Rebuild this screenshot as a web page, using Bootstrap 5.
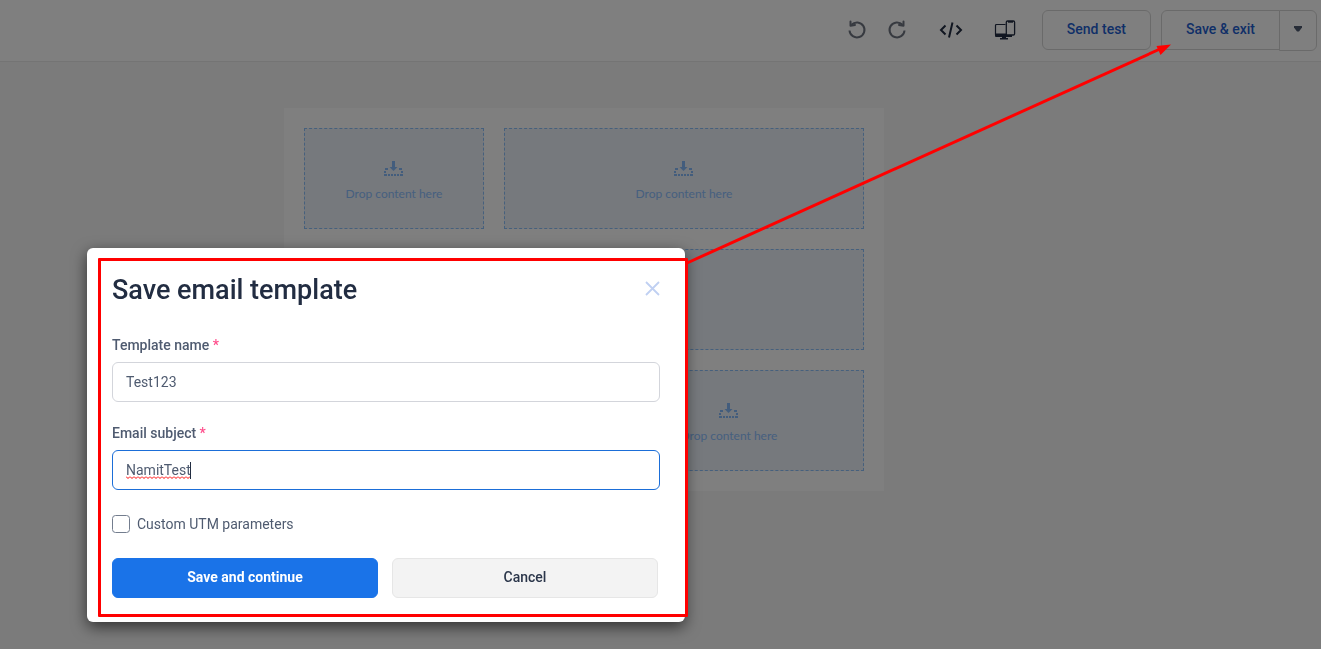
<!DOCTYPE html>
<html lang="en">
<head>
<meta charset="utf-8">
<meta name="viewport" content="width=device-width, initial-scale=1">
<title>Save email template</title>
<link href="https://cdn.jsdelivr.net/npm/bootstrap@5.3.0/dist/css/bootstrap.min.css" rel="stylesheet">
<script src="https://cdn.jsdelivr.net/npm/bootstrap@5.3.0/dist/js/bootstrap.bundle.min.js" defer></script>
<style>
  body { font-family: Roboto, "Liberation Sans", sans-serif; font-size: 14px; background: #f7f7f7; color: #4f5b70; min-height: 100vh; }
  svg { display: block; }

  .editor-bar { background: #fff; border-bottom: 1px solid #e8e8e8; padding: 10px 4px 10px 0; height: 62px; }
  .tool-btn { width: 40px; height: 40px; padding: 0; border: 0; background: none; display: flex; align-items: center; justify-content: center; }
  .tool-group { gap: 14px; margin-right: 17px; }
  .save-group { margin-left: 10px; }
  .bar-btn { --bs-btn-color: #1f5fd0; --bs-btn-border-color: #d5d5d5; --bs-btn-bg: #fff; --bs-btn-padding-x: 24px; --bs-btn-padding-y: 0; --bs-btn-font-size: 14px; --bs-btn-font-weight: 500; --bs-btn-border-radius: 6px; height: 40px; line-height: 36px; padding-bottom: 2px; }
  .bar-caret { --bs-btn-padding-x: 14px; height: 41px; padding-bottom: 4px; }

  .canvas-area { padding: 46px 153px 46px 0; }
  .paper { background: #fff; max-width: 600px; padding: 20px; }
  .paper-row { display: grid; gap: 20px; }
  .split-third { grid-template-columns: 180px 1fr; }
  .split-half { grid-template-columns: 1fr 1fr; }
  .drop-zone { height: 101px; border: 1px dashed #8cc0fa; background: #ecf2fa; color: #8cc0ff; font: 12px/18px Lato, "Noto Sans", sans-serif; padding-top: 6px; }

  .veil { position: fixed; inset: 0; background: rgba(0, 0, 0, .5); }
  .save-dialog { position: absolute; left: 87px; top: 248px; width: 598px; background: #fff; border-radius: 6px; padding: 24px 25px; box-shadow: 0 5px 15px rgba(0, 0, 0, .6); }
  .dialog-head { margin-bottom: 26px; }
  .save-dialog h1 { font-size: 27px; line-height: 37px; font-weight: 500; color: #222d42; }
  .close-x { width: 16px; height: 16px; padding: 0; border: 0; background: none; }
  .field-label { font-weight: 500; line-height: 20px; margin-bottom: 7px; }
  .field-block { margin-bottom: 21px; }
  .req { color: #ff4d8b; }
  .field-input { height: 40px; font-size: 14px; padding: 0 13px; color: #4f5b70; border-color: #d3d5db; border-radius: 6px; }
  .field-input.is-active { border-color: #1b6ed8; }
  .typing-mark { position: absolute; left: 14px; top: 12px; pointer-events: none; }
  .utm-check { width: 18px; height: 18px; margin: 0; border: 1px solid #737d8e; border-radius: 4px; }
  .utm-label { line-height: 20px; }
  .utm-row { gap: 7px; }
  .button-row { gap: 14px; }
  .dialog-btn { height: 40px; padding: 0 0 2px; font-size: 14px; border-radius: 6px; width: 266px; }
  .btn-go { --bs-btn-bg: #1a73e8; --bs-btn-border-color: #1a73e8; --bs-btn-color: #fff; font-weight: 700; }
  .btn-no { --bs-btn-bg: #f3f3f3; --bs-btn-border-color: #e6e6e6; --bs-btn-color: #2b364a; font-weight: 500; }
  .red-frame { position: absolute; inset: 10px -3px 5px 11px; border: 3px solid #f00; border-radius: 1px; pointer-events: none; }
  .red-arrow { position: absolute; left: 0; top: 0; pointer-events: none; }
</style>
</head>
<body>
<header class="editor-bar d-flex justify-content-end align-items-start">
  <div class="tool-group d-flex">
    <div class="d-flex">
      <button class="tool-btn" type="button" aria-label="Undo">
        <svg width="20" height="20" viewBox="0 0 20 20" fill="none" stroke="#6f7581" stroke-width="2"><path d="M4.500 4.800A7.500 7.500 0 1 1 2.500 10.500"/><path d="M3.500 1.500v4.300l4.500-.8" stroke-linejoin="round" stroke-linecap="round"/></svg>
      </button>
      <button class="tool-btn" type="button" aria-label="Redo">
        <svg width="20" height="20" viewBox="0 0 20 20" fill="none" stroke="#6f7581" stroke-width="2"><path d="M15.500 4.800A7.500 7.500 0 1 0 17.500 10.500"/><path d="M16.500 1.500v4.300l-4.500-.8" stroke-linejoin="round" stroke-linecap="round"/></svg>
      </button>
    </div>
    <button class="tool-btn" type="button" aria-label="Code">
      <svg width="24" height="18" viewBox="0 0 24 18" fill="none" stroke="#222d42" stroke-width="2"><path d="M6.500 4.500L2 9l4.500 4.500M17.500 4.500L22 9l-4.500 4.500M13.500 1.500L10 16.500"/></svg>
    </button>
    <button class="tool-btn" type="button" aria-label="Preview on devices">
      <svg width="22" height="20" viewBox="0 0 22 20"><path d="M11.500 4.500H2.500A1 1 0 0 0 1.500 5.500v9a1 1 0 0 0 1 1H17v-1" fill="none" stroke="#222d42" stroke-width="1.200"/><path d="M1 13.500h11V15h6v2H2a1 1 0 0 1-1-1z" fill="#222d42"/><path d="M8 16h4v2h2v1.500H6V18h2z" fill="#222d42"/><rect x="12.300" y="1" width="8.300" height="14" rx="1.300" fill="#fff" stroke="#222d42" stroke-width="1.300"/><path d="M14 1h5v1.700h-5z" fill="#222d42"/></svg>
    </button>
  </div>
  <button class="btn bar-btn" type="button">Send test</button>
  <div class="btn-group align-items-start save-group">
    <button class="btn bar-btn" type="button">Save &amp; exit</button>
    <button class="btn bar-btn bar-caret d-flex align-items-center" type="button" aria-label="More save options">
      <svg width="8" height="6" viewBox="0 0 8 6"><path d="M0 0h8v1.500L5 5.500H3L0 1.500z" fill="#4f5b70"/></svg>
    </button>
  </div>
</header>

<main class="canvas-area">
  <div class="paper paper-row mx-auto">
    <div class="paper-row split-third">
      <div class="drop-zone d-flex flex-column align-items-center justify-content-center gap-2">
        <svg width="20" height="16" viewBox="0 0 20 16"><use href="#drop-icon"/></svg><span>Drop content here</span>
      </div>
      <div class="drop-zone d-flex flex-column align-items-center justify-content-center gap-2">
        <svg width="20" height="16" viewBox="0 0 20 16"><use href="#drop-icon"/></svg><span>Drop content here</span>
      </div>
    </div>
    <div class="drop-zone"></div>
    <div class="paper-row split-half">
      <div class="drop-zone"></div>
      <div class="drop-zone d-flex flex-column align-items-center justify-content-center gap-2">
        <svg width="20" height="16" viewBox="0 0 20 16"><use href="#drop-icon"/></svg><span>Drop content here</span>
      </div>
    </div>
  </div>
</main>

<svg width="0" height="0" class="position-absolute">
  <defs>
    <g id="drop-icon" fill="#86bbfa"><path d="M8 0h3v6h2.500L9.500 10 5.500 6H8z"/><path d="M0 13h3v2H0zM4 13h2v2H4zM7 13h2v2H7zM10 13h2v2h-2zM13 13h2v2h-2zM16 13h3v2h-3zM0 10h2v2H0zM17 10h2v2h-2zM1 7h3v2H1zM15 7h3v2h-3z"/></g>
  </defs>
</svg>

<div class="veil"></div>

<form class="save-dialog" role="dialog" aria-labelledby="dialog-title">
  <div class="dialog-head d-flex justify-content-between align-items-start">
    <h1 id="dialog-title" class="mb-0">Save email template</h1>
    <button class="close-x mt-2" type="button" aria-label="Close">
      <svg width="16" height="16" viewBox="0 0 16 16" stroke="#c0d0f2" stroke-width="1.800"><path d="M2 2l13 13M15 2L2 15"/></svg>
    </button>
  </div>
  <div class="field-block">
    <label class="field-label d-block" for="tpl-name">Template name <span class="req">*</span></label>
    <input class="form-control field-input" id="tpl-name" type="text" value="Test123">
  </div>
  <div class="mb-4">
    <label class="field-label d-block" for="tpl-subject">Email subject <span class="req">*</span></label>
    <div class="position-relative">
      <input class="form-control field-input is-active" id="tpl-subject" type="text" value="NamitTest" spellcheck="false">
      <svg class="typing-mark" width="66" height="18" viewBox="0 0 66 18">
        <defs><pattern id="wave" width="4" height="3" patternUnits="userSpaceOnUse" y="14"><path d="M0 .5L2 2.500L4 .5" fill="none" stroke="#f00"/></pattern></defs>
        <rect y="14" width="65" height="3" fill="url(#wave)"/><path d="M64.500 0v17" stroke="#222d42"/>
      </svg>
    </div>
  </div>
  <div class="utm-row d-flex align-items-center mb-4">
    <input class="form-check-input utm-check" id="utm" type="checkbox">
    <label class="utm-label" for="utm">Custom UTM parameters</label>
  </div>
  <div class="button-row d-flex">
    <button class="btn dialog-btn btn-go" type="button">Save and continue</button>
    <button class="btn dialog-btn btn-no" type="button">Cancel</button>
  </div>
  <div class="red-frame"></div>
</form>

<svg class="red-arrow" width="1180" height="300" viewBox="0 0 1180 300" aria-hidden="true">
  <path d="M687 263L1160 49" stroke="#f00" stroke-width="3"/><path d="M1171 44.500L1156.500 46L1160.500 55z" fill="#f00"/>
</svg>
</body>
</html>
